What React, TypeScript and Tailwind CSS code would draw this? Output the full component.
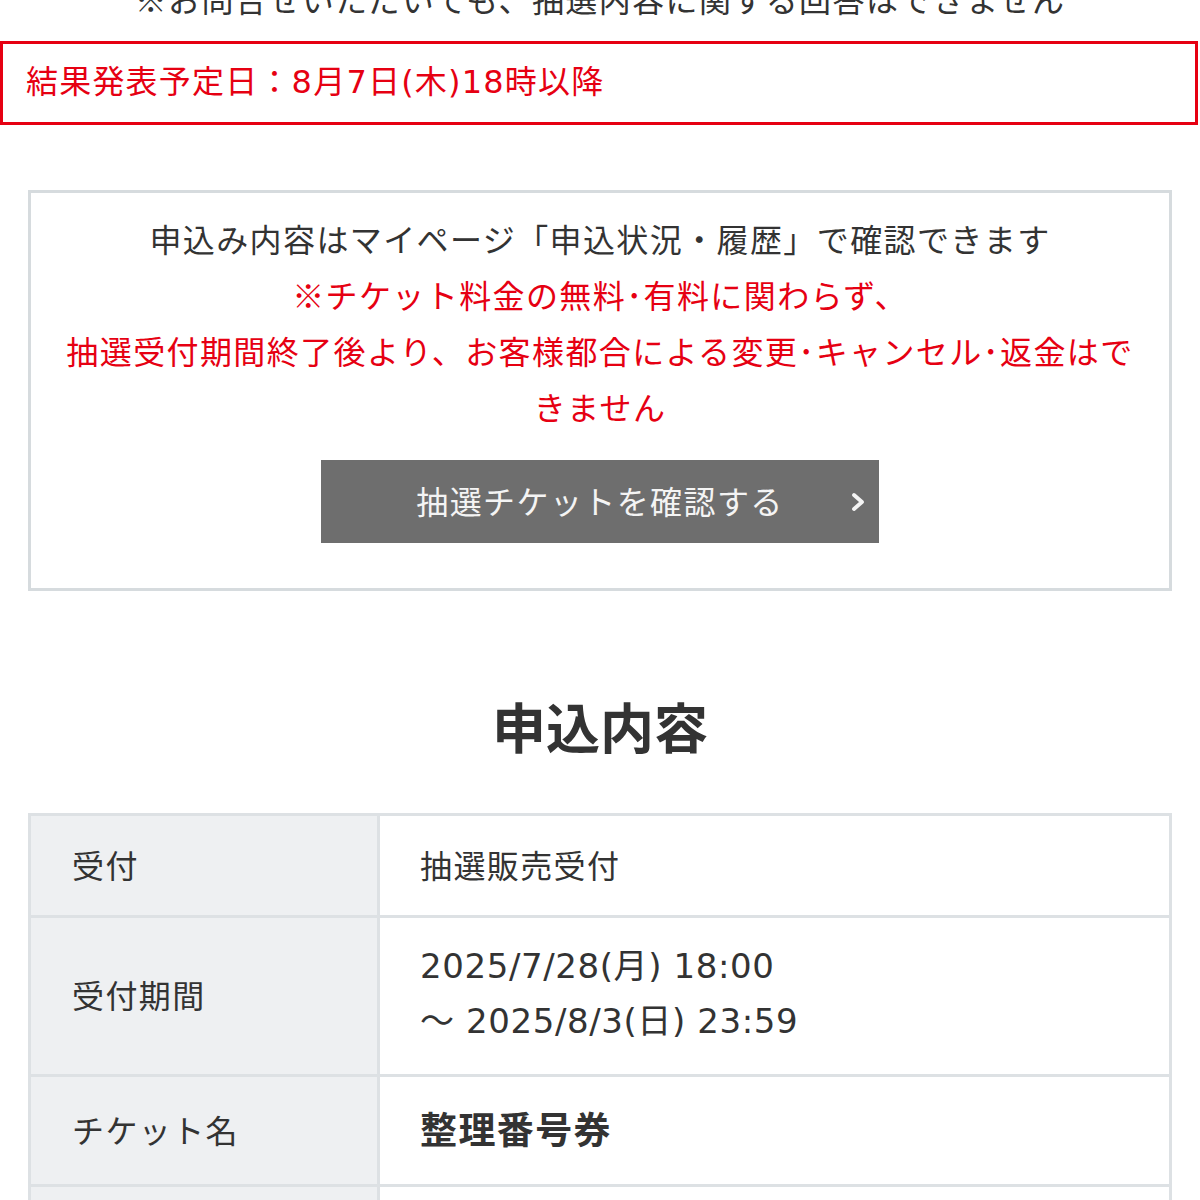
import { FC } from "react";

const latin = "font-['DejaVu_Sans','Noto_Sans_CJK_JP',sans-serif]";

const rows = [
  { label: "受付", value: <span>抽選販売受付</span>, h: "h-[102px]" },
  {
    label: "受付期間",
    value: (
      <span className={`text-[34px] leading-[55px] tracking-[0.6px] ${latin}`}>
        2025/7/28(月) 18:00
        <br />～ 2025/8/3(日) 23:59
      </span>
    ),
    h: "h-[159px]",
  },
  { label: "チケット名", value: <span className="font-bold text-[37px]">整理番号券</span>, h: "h-[110px]" },
  { label: "枚数", value: <span>1枚</span>, h: "h-[102px]" },
];

const App: FC = () => {
  return (
    <div className="w-[1200px] h-[1200px] overflow-hidden bg-white text-[#333] font-['Noto_Sans_CJK_JP',sans-serif] tracking-[1.4px]">
      <p className="-mt-[26px] h-[48px] text-center text-[32px] leading-[48px] text-[#333]">
        ※お問合せいただいても、抽選内容に関する回答はできません
      </p>

      <div className="mt-[19px] mr-[2px] flex h-[84px] items-center border-[3px] border-[#e60012] pb-[5px] pl-[23px] text-[32px] text-[#e60012]">
        <span className="tracking-[1.2px]">
          結果発表予定日：<span className={latin}>8</span>月<span className={latin}>7</span>日
          <span className={latin}>(</span>木<span className={latin}>)18</span>時以降
        </span>
      </div>

      <div className="mx-[28px] mt-[65px] flex h-[401px] flex-col items-center border-[3px] border-[#d6dbde] pt-[17px] text-center text-[32px] leading-[56px]">
        <p className="text-[#333]">申込み内容はマイページ「申込状況・履歴」で確認できます</p>
        <p className="px-[30px] text-[#e60012]">
          ※チケット料金の無料･有料に関わらず、
          <br />
          抽選受付期間終了後より、お客様都合による変更･キャンセル･返金はできません
        </p>
        <button className="relative mt-[26px] flex h-[83px] w-[558px] items-center justify-center bg-[#6e6e6e] pb-[4px] text-[32px] text-[#f4f4f4]">
          抽選チケットを確認する
          <svg
            className="absolute right-[12px] top-1/2 -translate-y-1/2"
            width="18"
            height="24"
            viewBox="0 0 18 24"
            fill="none"
          >
            <path d="M5 5 L13 12 L5 19" stroke="#f4f4f4" strokeWidth="3.8" strokeLinecap="round" strokeLinejoin="round" />
          </svg>
        </button>
      </div>

      <h2 className="mt-[97px] text-center text-[54px] font-bold leading-[76px] tracking-normal text-[#333]">申込内容</h2>

      <div className="mx-[28px] mt-[49px] border-[3px] border-b-0 border-[#dde1e4]">
        {rows.map((r) => (
          <div key={r.label} className={`flex border-b-[3px] border-[#dde1e4] ${r.h}`}>
            <div className="flex w-[349px] shrink-0 items-center border-r-[3px] border-[#dde1e4] bg-[#eef0f2] pb-[4px] pl-[41px] text-[32px]">
              {r.label}
            </div>
            <div className="flex flex-1 items-center pb-[4px] pl-[40px] text-[32px]">{r.value}</div>
          </div>
        ))}
      </div>
    </div>
  );
};

export default App;
